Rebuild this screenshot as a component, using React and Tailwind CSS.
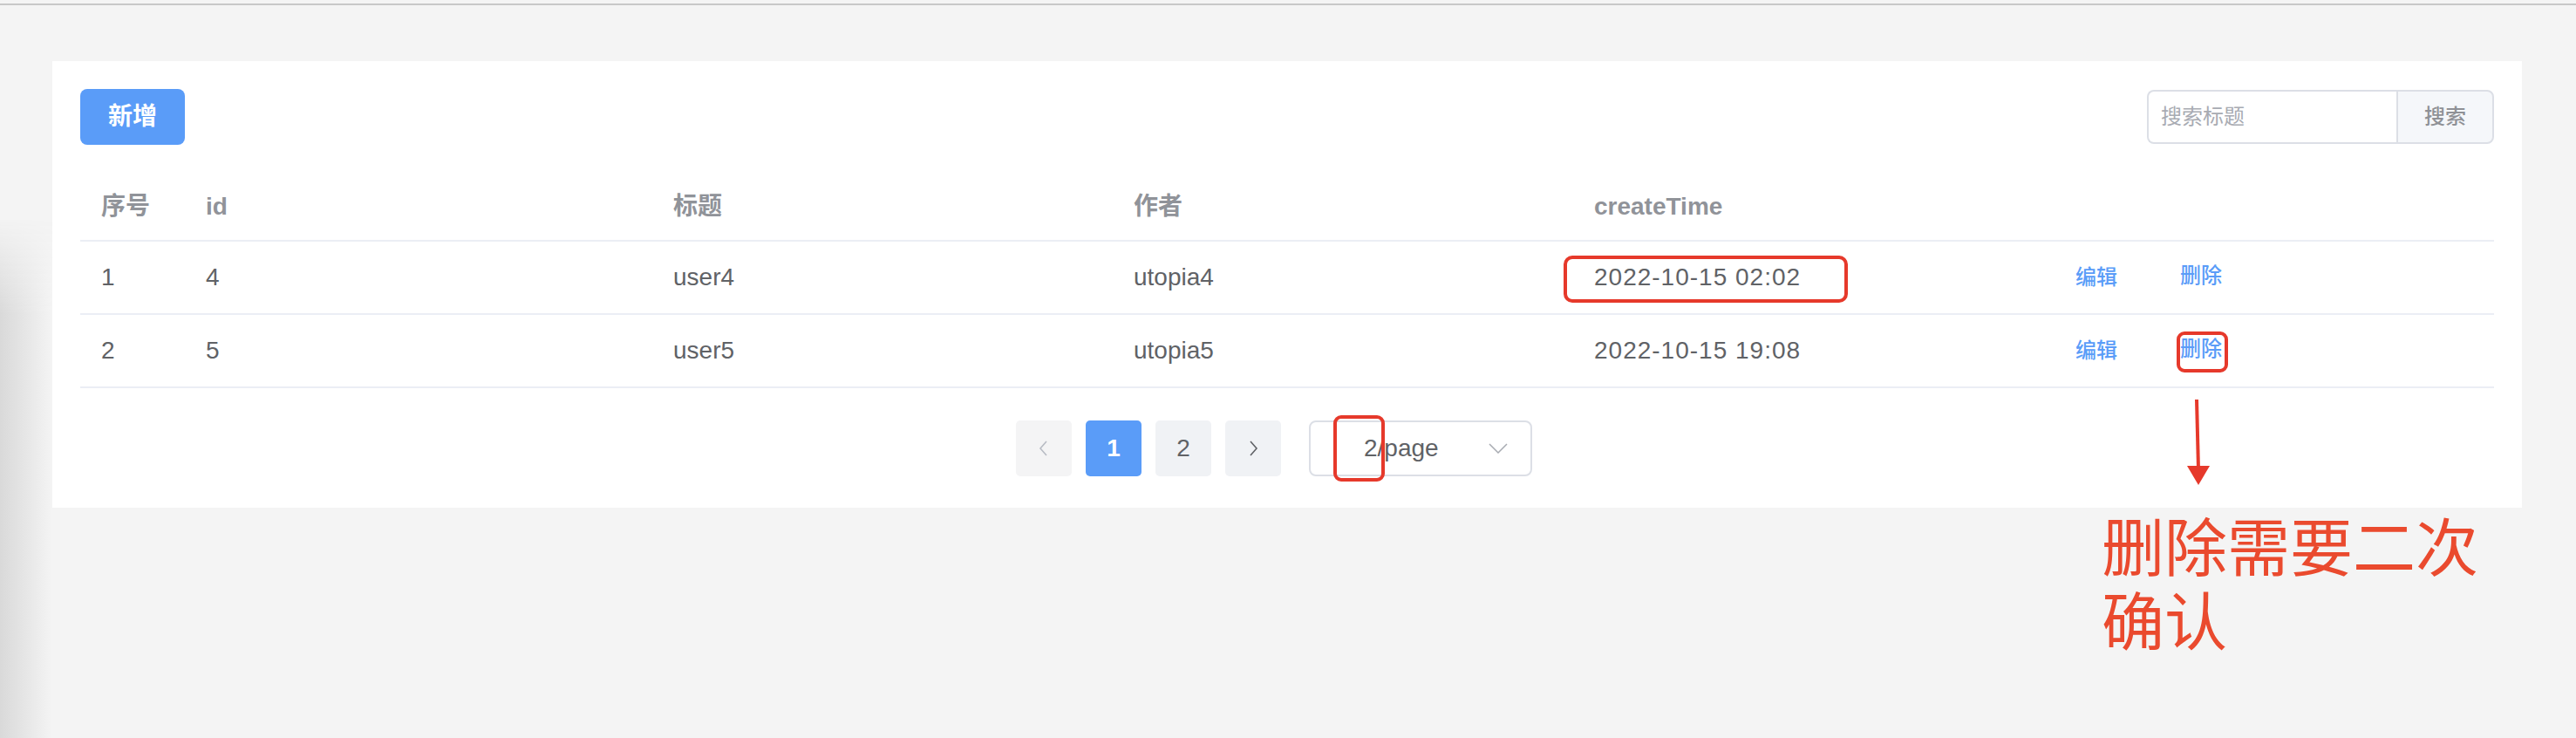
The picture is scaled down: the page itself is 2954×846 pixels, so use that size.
import React from 'react';

const rows = [
    {no: 1, id: 4, title: 'user4', author: 'utopia4', time: '2022-10-15 02:02'},
    {no: 2, id: 5, title: 'user5', author: 'utopia5', time: '2022-10-15 19:08'},
];

const cols = "grid grid-cols-[120px_536px_528px_528px_552px_1fr]";

const Chevron = ({dir, color}) => (
    <svg width="12" height="18" viewBox="0 0 12 18" fill="none">
        <polyline
            points={dir === 'left' ? "9,1 2,9 9,17" : "3,1 10,9 3,17"}
            stroke={color}
            strokeWidth="1.6"
            strokeLinejoin="miter"
        />
    </svg>
);

const App = () => {
    return (
        <div className="relative min-h-[846px] bg-[#f4f4f4] font-['Liberation_Sans','Noto_Sans_CJK_SC',sans-serif]">
            {/* left edge shadow */}
            <div className="absolute left-0 top-[250px] bottom-0 w-[60px] bg-linear-to-r from-[#d9d9d9] to-[#f4f4f4] [mask-image:linear-gradient(to_bottom,transparent,black_110px)]"/>

            <div className="h-[4px]"/>
            <div className="h-[2px] bg-[#c8c8c8]"/>

            <div className="relative pt-[64px] pl-[60px] pr-[62px]">
                <div className="bg-white px-[32px] pt-[32px] pb-[36px]">
                    {/* toolbar */}
                    <div className="flex items-center justify-between h-[64px]">
                        <button className="w-[120px] h-[64px] rounded-[8px] bg-[#5a9cf8] text-white text-[28px] font-bold">
                            新增
                        </button>
                        <div className="flex h-[62px]">
                            <div className="w-[286px] h-full border-2 border-r-0 border-[#dcdfe6] rounded-l-[8px] flex items-center pl-[14px] text-[24px] text-[#a8abb2]">
                                搜索标题
                            </div>
                            <button className="w-[112px] h-full border-2 border-[#dcdfe6] rounded-r-[8px] bg-[#f5f7fa] text-[24px] text-[#8f9196] font-medium">
                                搜索
                            </button>
                        </div>
                    </div>

                    {/* table */}
                    <div className={`${cols} mt-[27px] h-[84px] pt-[6px] items-center border-b-2 border-[#ebeef5] text-[28px] font-bold text-[#909399]`}>
                        <div className="pl-[24px]">序号</div>
                        <div className="pl-[24px]">id</div>
                        <div className="pl-[24px]">标题</div>
                        <div className="pl-[24px]">作者</div>
                        <div className="pl-[24px]">createTime</div>
                        <div className="pl-[24px]"></div>
                    </div>
                    {rows.map((r, i) => (
                        <div key={r.id} className={`${cols} h-[84px] items-center border-b-2 border-[#ebeef5] text-[28px] text-[#606266]`}>
                            <div className="pl-[24px]">{r.no}</div>
                            <div className="pl-[24px]">{r.id}</div>
                            <div className="pl-[24px]">{r.title}</div>
                            <div className="pl-[24px]">{r.author}</div>
                            <div className="relative pl-[24px] tracking-[1px] h-full flex items-center">
                                {r.time}
                                {i === 0 && (
                                    <div className="absolute left-[-11px] top-[16px] w-[326px] h-[54px] border-[4px] border-[#e6392b] rounded-[10px]"/>
                                )}
                            </div>
                            <div className="pl-[24px] flex gap-[72px] text-[24px] font-medium text-[#5a9cf8]">
                                <span>编辑</span>
                                <span className="relative leading-[32px]">
                                    删除
                                    {i === 1 && (
                                        <span className="absolute left-[-4px] top-[-4px] w-[59px] h-[47px] border-[4px] border-[#e6392b] rounded-[9px]"/>
                                    )}
                                </span>
                            </div>
                        </div>
                    ))}

                    {/* pagination */}
                    <div className="mt-[37px] flex justify-center pr-[30px] h-[64px] text-[28px]">
                        <div className="flex gap-[16px]">
                            <div className="w-[64px] h-[64px] rounded-[5px] bg-[#f4f4f5] flex items-center justify-center">
                                <Chevron dir="left" color="#b8bcc4"/>
                            </div>
                            <div className="w-[64px] h-[64px] rounded-[5px] bg-[#5a9cf8] text-white font-bold flex items-center justify-center">1</div>
                            <div className="w-[64px] h-[64px] rounded-[5px] bg-[#f0f2f5] text-[#606266] flex items-center justify-center">2</div>
                            <div className="w-[64px] h-[64px] rounded-[5px] bg-[#f0f2f5] flex items-center justify-center">
                                <Chevron dir="right" color="#606266"/>
                            </div>
                        </div>
                        <div className="relative ml-[32px] w-[256px] h-[64px] border-2 border-[#dcdfe6] rounded-[8px] flex items-center justify-between pl-[61px] pr-[26px] text-[#606266]">
                            <span>2/page</span>
                            <svg width="22" height="12" viewBox="0 0 22 12" fill="none">
                                <polyline points="1,1 11,11 21,1" stroke="#a8abb2" strokeWidth="1.5"/>
                            </svg>
                            <div className="absolute left-[26px] top-[-8px] w-[59px] h-[76px] border-[4px] border-[#e6392b] rounded-[9px]"/>
                        </div>
                    </div>
                </div>
            </div>

            {/* annotation */}
            <svg className="absolute left-[2505px] top-[456px]" width="30" height="102" viewBox="0 0 30 102">
                <line x1="14" y1="2" x2="16" y2="82" stroke="#e6392b" strokeWidth="4"/>
                <polygon points="3,78 29,78 16,100" fill="#e6392b"/>
            </svg>
            <div className="absolute left-[2410px] top-[580px] whitespace-nowrap text-[72px] text-[#ea4a2e] font-['Noto_Sans_CJK_SC',sans-serif]">
                <div className="h-[85px] leading-[85px]">删除需要二次</div>
                <div className="h-[85px] leading-[85px]">确认</div>
            </div>
        </div>
    );
};

export default App;
